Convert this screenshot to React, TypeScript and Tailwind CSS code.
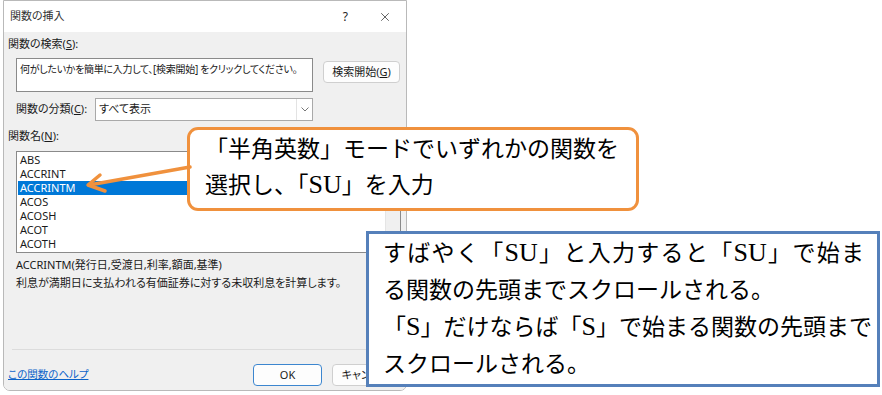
import { X } from 'lucide-react';

const uiFont = "font-['Noto_Sans','Noto_Sans_CJK_JP',sans-serif] [font-feature-settings:'palt']";
const noteFont = "font-['Liberation_Serif','Noto_Sans_CJK_JP',serif]";

const functions = ['ABS', 'ACCRINT', 'ACCRINTM', 'ACOS', 'ACOSH', 'ACOT', 'ACOTH'];

// latin letters in the notes are set a bit larger so they match the kana height
function L({ children }: { children: string }) {
    return <span className="text-[26px] leading-none">{children}</span>;
}

function InsertFunctionDialog() {
    return (
        <div className={`ml-[3px] w-[404px] h-[391px] flex flex-col border border-[#b9b9b9] rounded-b-[7px] overflow-hidden text-[11px] text-[#1a1a1a] ${uiFont}`}>
            {/* title bar */}
            <div className="h-[31px] shrink-0 bg-white flex items-center justify-between pl-[6px] pr-[14px]">
                <span className="text-[#333]">関数の挿入</span>
                <div className="flex items-center gap-[30px]">
                    <span className="text-[12px] text-[#222]">?</span>
                    <X className="w-[14px] h-[14px] text-[#333]" strokeWidth={1.3} />
                </div>
            </div>

            <div className="flex-1 bg-[#f0f0f0] flex flex-col pl-[4px] pr-[5px]">
                <div className="mt-[5px] h-[14px] leading-[14px]">関数の検索(<span className="underline">S</span>):</div>

                <div className="mt-[7px] flex items-start">
                    <div className="ml-[8px] w-[297px] h-[34px] bg-white border border-[#8a8a8a] px-[3px] pt-[3px] text-[10px] tracking-[-0.3px] leading-[15px] whitespace-nowrap overflow-hidden">
                        何がしたいかを簡単に入力して、[検索開始] をクリックしてください。
                    </div>
                    <button className="ml-[10px] mt-[3px] w-[77px] h-[22px] bg-[#fdfdfd] border border-[#cfcfcf] rounded-[4px] text-[11px]">
                        検索開始(<span className="underline">G</span>)
                    </button>
                </div>

                <div className="mt-[6px] flex items-center h-[23px]">
                    <span className="ml-[8px] w-[79px]">関数の分類(<span className="underline">C</span>):</span>
                    <div className="w-[218px] h-[23px] bg-white border border-[#a9a9a9] flex items-center">
                        <span className="flex-1 pl-[3px]">すべて表示</span>
                        <div className="w-[16px] h-full border-l border-[#e3e3e3] flex items-center justify-center">
                            <svg width="8" height="5" viewBox="0 0 8 5">
                                <path d="M0.5 0.5 L4 4 L7.5 0.5" fill="none" stroke="#777" strokeWidth="1" />
                            </svg>
                        </div>
                    </div>
                </div>

                <div className="mt-[8px] h-[14px] leading-[14px]">関数名(<span className="underline">N</span>):</div>

                <div className="mt-[8px] ml-[8px] w-[385px] h-[102px] bg-white border border-[#8a8a8a] flex">
                    <div className="flex-1 pt-[1px] pl-[1px]">
                        {functions.map((name) => (
                            <div
                                key={name}
                                className={`h-[14px] leading-[14px] pl-[2px] ${name === 'ACCRINTM' ? 'bg-[#0078d7] text-white' : ''}`}
                            >
                                {name}
                            </div>
                        ))}
                    </div>
                    <div className="w-[15px] bg-[#f0f0f0] border-l border-[#e5e5e5]" />
                </div>

                <div className="mt-[3px] ml-[8px] leading-[18px]">
                    <div>ACCRINTM(発行日,受渡日,利率,額面,基準)</div>
                    <div>利息が満期日に支払われる有価証券に対する未収利息を計算します。</div>
                </div>

                <div className="mt-[57px] ml-[4px] border-t border-[#dcdcdc]" />

                <div className="mt-[14px] flex items-center h-[22px]">
                    <a className="w-[82px] whitespace-nowrap text-[10.5px] text-[#0b63c9] underline">この関数のヘルプ</a>
                    <button className="ml-[163px] w-[69px] h-[22px] bg-[#fdfdfd] border-[1.5px] border-[#3c86cf] rounded-[4px]">OK</button>
                    <button className="ml-[10px] w-[69px] h-[22px] bg-[#fdfdfd] border border-[#cfcfcf] rounded-[4px] whitespace-nowrap">キャンセル</button>
                </div>
            </div>
        </div>
    );
}

export default function App() {
    return (
        <div className="relative w-[882px] h-[395px] bg-white overflow-hidden">
            <InsertFunctionDialog />

            {/* orange callout */}
            <div className={`absolute left-[187px] top-[127px] w-[452px] h-[84px] bg-white border-[3px] border-[#f0913d] rounded-[11px] pl-[15px] pt-[2px] text-[23px] leading-[36px] text-black ${noteFont}`}>
                <div>「半角英数」モードでいずれかの関数を</div>
                <div>選択し、「<L>SU</L>」を入力</div>
            </div>

            {/* arrow */}
            <svg className="absolute left-[80px] top-[158px]" width="112" height="40" viewBox="0 0 112 40">
                <path d="M110 9 L9 27" stroke="#f0913d" strokeWidth="3.5" fill="none" strokeLinecap="round" />
                <path d="M20 17 L8 27 L25 33" stroke="#f0913d" strokeWidth="3.5" fill="none" strokeLinecap="round" strokeLinejoin="round" />
            </svg>

            {/* blue note */}
            <div className={`absolute left-[366px] top-[231px] w-[514px] h-[156px] bg-white border-[3px] border-[#5580ba] pl-[14px] pt-[1px] text-[23px] leading-[37px] text-black ${noteFont}`}>
                <div className="w-[481px] [text-align-last:justify]">すばやく「<L>SU</L>」と入力すると「<L>SU</L>」で始ま</div>
                <div>る関数の先頭までスクロールされる。</div>
                <div className="whitespace-nowrap">「<L>S</L>」だけならば「<L>S</L>」で始まる関数の先頭まで</div>
                <div>スクロールされる。</div>
            </div>
        </div>
    );
}
